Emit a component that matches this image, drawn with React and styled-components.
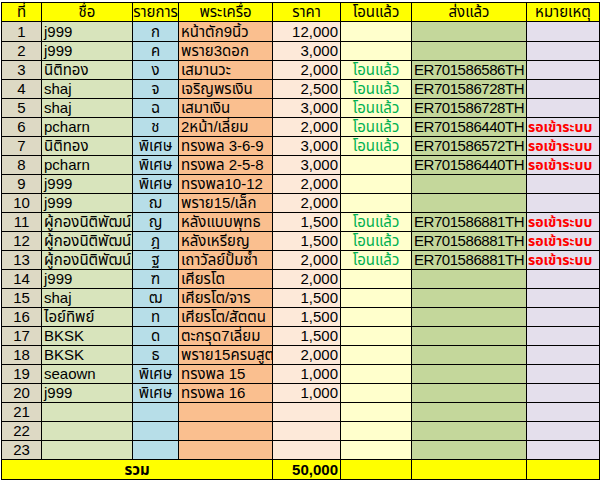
import React from 'react'
import styled, { createGlobalStyle } from 'styled-components'

const GlobalStyle = createGlobalStyle`
  body {
    margin: 0;
    background: #fff;
    font-family: "Liberation Sans", "Noto Sans Thai", sans-serif;
  }
`

const COLS = [
  { w: 40, bg: '#ddd9c4', align: 'center' },
  { w: 91, bg: '#d8e4bc', align: 'left' },
  { w: 46, bg: '#b7dee8', align: 'center' },
  { w: 94, bg: '#fabf8f', align: 'left' },
  { w: 68, bg: '#fde9d9', align: 'right' },
  { w: 71, bg: '#ffffcc', align: 'center', tone: 'green' },
  { w: 115, bg: '#c4d79b', align: 'left', tone: 'ship' },
  { w: 73, bg: '#e4dfec', align: 'left', tone: 'red' },
]

const HEAD = ['ที่', 'ชื่อ', 'รายการ', 'พระเครื่อ', 'ราคา', 'โอนแล้ว', 'ส่งแล้ว', 'หมายเหตุ']

const T = 'โอนแล้ว'
const W = 'รอเข้าระบบ'

const ROWS = [
  ['j999', 'ก', 'หน้าตัก9นิ้ว', '12,000', '', '', ''],
  ['j999', 'ค', 'พราย3ดอก', '3,000', '', '', ''],
  ['นิติทอง', 'ง', 'เสมานวะ', '2,000', T, 'ER701586586TH', ''],
  ['shaj', 'จ', 'เจริญพรเงิน', '2,500', T, 'ER701586728TH', ''],
  ['shaj', 'ฉ', 'เสมาเงิน', '3,000', T, 'ER701586728TH', ''],
  ['pcharn', 'ช', '2หน้า/เลี่ยม', '2,000', T, 'ER701586440TH', W],
  ['นิติทอง', 'พิเศษ', 'ทรงพล 3-6-9', '3,000', T, 'ER701586572TH', W],
  ['pcharn', 'พิเศษ', 'ทรงพล 2-5-8', '3,000', '', 'ER701586440TH', W],
  ['j999', 'พิเศษ', 'ทรงพล10-12', '2,000', '', '', ''],
  ['j999', 'ฌ', 'พราย15/เล็ก', '2,000', '', '', ''],
  ['ผู้กองนิติพัฒน์', 'ญ', 'หลังแบบพุทธ', '1,500', T, 'ER701586881TH', W],
  ['ผู้กองนิติพัฒน์', 'ฎ', 'หลังเหรียญ', '1,500', T, 'ER701586881TH', W],
  ['ผู้กองนิติพัฒน์', 'ฐ', 'เถาวัลย์ปั้มซ้ำ', '2,000', T, 'ER701586881TH', W],
  ['j999', 'ฑ', 'เศียรโต', '2,000', '', '', ''],
  ['shaj', 'ฒ', 'เศียรโต/จาร', '1,500', '', '', ''],
  ['ไอย์ทิพย์', 'ท', 'เศียรโต/สัตตน', '1,500', '', '', ''],
  ['BKSK', 'ด', 'ตะกรุด7เลี่ยม', '1,500', '', '', ''],
  ['BKSK', 'ธ', 'พราย15ครบสูต', '2,000', '', '', ''],
  ['seaown', 'พิเศษ', 'ทรงพล 15', '1,000', '', '', ''],
  ['j999', 'พิเศษ', 'ทรงพล 16', '1,000', '', '', ''],
  ['', '', '', '', '', '', ''],
  ['', '', '', '', '', '', ''],
  ['', '', '', '', '', '', ''],
]

function App() {
  return (
    <>
      <GlobalStyle />
      <Sheet>
        <Row $h={19}>
          {HEAD.map((h, i) => (
            <Cell key={i} $w={COLS[i].w} $bg="#ffff00" $align="center">{h}</Cell>
          ))}
        </Row>
        {ROWS.map((r, ri) => (
          <Row key={ri} $h={ri === 0 ? 20 : 19}>
            <Cell $w={COLS[0].w} $bg={COLS[0].bg} $align="center">{ri + 1}</Cell>
            {r.map((v, ci) => {
              const c = COLS[ci + 1]
              return (
                <Cell key={ci} $w={c.w} $bg={c.bg} $align={c.align} $tone={c.tone}>
                  {v}
                </Cell>
              )
            })}
          </Row>
        ))}
        <Row $h={20}>
          <Cell $w={271} $bg="#ffff00" $align="center" $bold>รวม</Cell>
          <Cell $w={68} $bg="#ffff00" $align="right" $bold>50,000</Cell>
          <Cell $w={71} $bg="#ffff00" />
          <Cell $w={115} $bg="#ffff00" />
          <Cell $w={73} $bg="#ffff00" />
        </Row>
      </Sheet>
    </>
  )
}

export default App

const Sheet = styled.div`
  margin: 2px 0 0 1px;
  width: 599px;
  border-top: 1px solid #000;
  border-left: 1px solid #000;
  box-sizing: border-box;
`

const Row = styled.div`
  display: flex;
  height: ${p => p.$h}px;
`

const Cell = styled.div`
  box-sizing: border-box;
  flex: 0 0 ${p => p.$w}px;
  width: ${p => p.$w}px;
  background: ${p => p.$bg};
  border-right: 1px solid #000;
  border-bottom: 1px solid #000;
  display: flex;
  align-items: center;
  justify-content: ${p => p.$align === 'right' ? 'flex-end' : p.$align === 'center' ? 'center' : 'flex-start'};
  padding: 0 ${p => p.$tone === 'red' ? 0 : 2}px 0 ${p => p.$tone === 'red' ? 1 : 2}px;
  font-size: ${p => p.$tone === 'red' ? '14px' : '15px'};
  letter-spacing: ${p => p.$tone === 'ship' ? '-0.45px' : 'normal'};
  line-height: 18px;
  font-weight: ${p => p.$bold || p.$tone === 'red' ? 700 : 400};
  color: ${p => p.$tone === 'green' ? '#00b050' : p.$tone === 'red' ? '#ff0000' : '#000'};
  white-space: nowrap;
  overflow: visible;
`
